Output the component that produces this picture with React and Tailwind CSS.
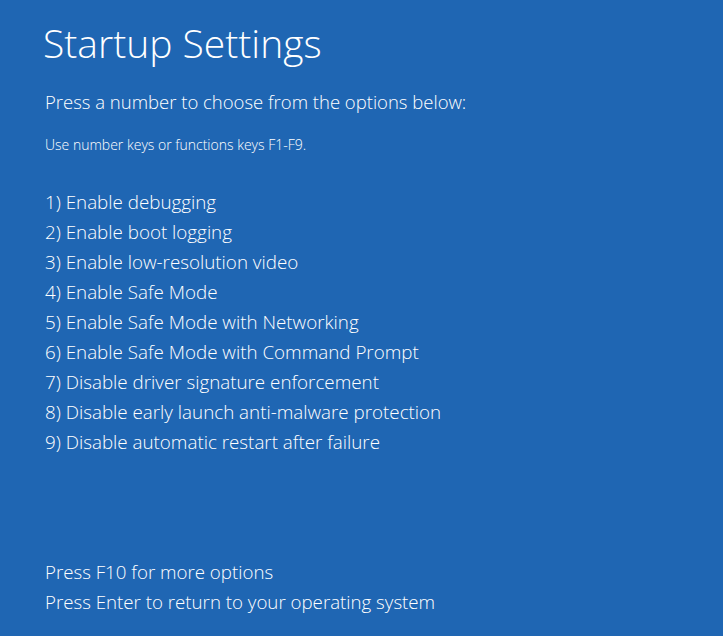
import React from 'react';

const options = [
  '1) Enable debugging',
  '2) Enable boot logging',
  '3) Enable low-resolution video',
  '4) Enable Safe Mode',
  '5) Enable Safe Mode with Networking',
  '6) Enable Safe Mode with Command Prompt',
  '7) Disable driver signature enforcement',
  '8) Disable early launch anti-malware protection',
  '9) Disable automatic restart after failure',
];

export default function App() {
  return (
    <div
      className="h-[636px] w-full bg-[#1f66b3] text-white flex flex-col pl-[45px] pb-[19px] font-light"
      style={{ fontFamily: '"Open Sans", "Noto Sans", sans-serif' }}
    >
      <h1 className="mt-[18px] -ml-[2px] text-[39px] leading-[50px] font-light">Startup Settings</h1>
      <p className="mt-[20px] text-[18.5px] leading-[28px]">Press a number to choose from the options below:</p>
      <p className="mt-[19px] text-[14px] leading-[20px]">Use number keys or functions keys F1-F9.</p>

      <ul className="mt-[32px] flex flex-col">
        {options.map((o) => (
          <li key={o} className="text-[18.8px] leading-[30px]">
            {o}
          </li>
        ))}
      </ul>

      <div className="mt-auto flex flex-col">
        <p className="text-[18.7px] leading-[30px]">Press F10 for more options</p>
        <p className="text-[18.7px] leading-[30px]">Press Enter to return to your operating system</p>
      </div>
    </div>
  );
}
